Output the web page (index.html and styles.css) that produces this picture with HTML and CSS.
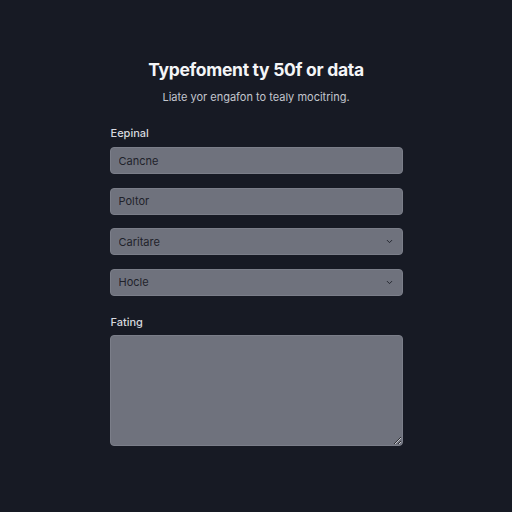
FILE: index.html
```html
<!DOCTYPE html>
<html lang="en">
<head>
  <meta charset="UTF-8">
  <meta name="viewport" content="width=device-width, initial-scale=1.0">
  <title>Typefoment ty 50f or data</title>
  <link rel="stylesheet" href="styles.css">
</head>
<body>
  <div class="form-container">
    <h1 class="title">Typefoment ty 50f or data</h1>
    <p class="subtitle">Liate yor engafon to tealy mocitring.</p>

    <label class="field-label" for="cancne">Eepinal</label>
    <div class="field-group">
      <input id="cancne" type="text" value="Cancne">
      <input id="potter" type="text" value="Poltor">
      <select id="caritare">
        <option>Caritare</option>
      </select>
      <select id="hocle">
        <option>Hocle</option>
      </select>
    </div>

    <label class="field-label field-label-spaced" for="fating">Fating</label>
    <textarea id="fating"></textarea>
  </div>
</body>
</html>
```

FILE: styles.css
```css
:root {
  --background-color: #171a24;
  --field-color: #6f727d;
  --field-border: #7b7e89;
  --text-primary: #f4f5f7;
  --text-secondary: #c3c6ce;
  --text-label: #d6d8de;
  --text-field: #1f222b;
  --border-radius: 4px;
}

* {
  box-sizing: border-box;
  margin: 0;
  padding: 0;
}

body {
  margin: 0;
  min-height: 512px;
  background-color: var(--background-color);
  font-family: Inter, 'Noto Sans', 'Liberation Sans', sans-serif;
  color: var(--text-primary);
  -webkit-font-smoothing: antialiased;
}

.form-container {
  width: 293px;
  margin: 0 auto;
  padding-top: 58px;
  display: flex;
  flex-direction: column;
}

.title {
  font-size: 17.5px;
  font-weight: 700;
  text-align: center;
  line-height: 24px;
  letter-spacing: -0.3px;
}

.subtitle {
  font-size: 11px;
  color: var(--text-secondary);
  text-align: center;
  margin-top: 8px;
  line-height: 14px;
}

.field-label {
  font-size: 11px;
  font-weight: 500;
  color: var(--text-label);
  margin-top: 22px;
  margin-bottom: 7px;
  padding-left: 1px;
  line-height: 14px;
}

.field-label-spaced {
  margin-top: 19px;
  margin-bottom: 6px;
}

.field-group {
  display: flex;
  flex-direction: column;
  gap: 13.5px;
}

input, select, textarea {
  width: 100%;
  background-color: var(--field-color);
  border: 1px solid var(--field-border);
  border-radius: var(--border-radius);
  font-family: inherit;
  font-size: 11px;
  color: var(--text-field);
  outline: none;
}

input, select {
  height: 27px;
  padding: 0 8px;
}

select {
  appearance: none;
  -webkit-appearance: none;
  background-image: url("data:image/svg+xml;charset=UTF-8,%3csvg xmlns='http://www.w3.org/2000/svg' viewBox='0 0 24 24' fill='none' stroke='%231f222b' stroke-width='2.5' stroke-linecap='round' stroke-linejoin='round'%3e%3cpolyline points='6 9 12 15 18 9'%3e%3c/polyline%3e%3c/svg%3e");
  background-repeat: no-repeat;
  background-position: right 8px center;
  background-size: 9px;
  padding-right: 24px;
}

textarea {
  height: 111px;
  resize: vertical;
  padding: 8px;
}
```
